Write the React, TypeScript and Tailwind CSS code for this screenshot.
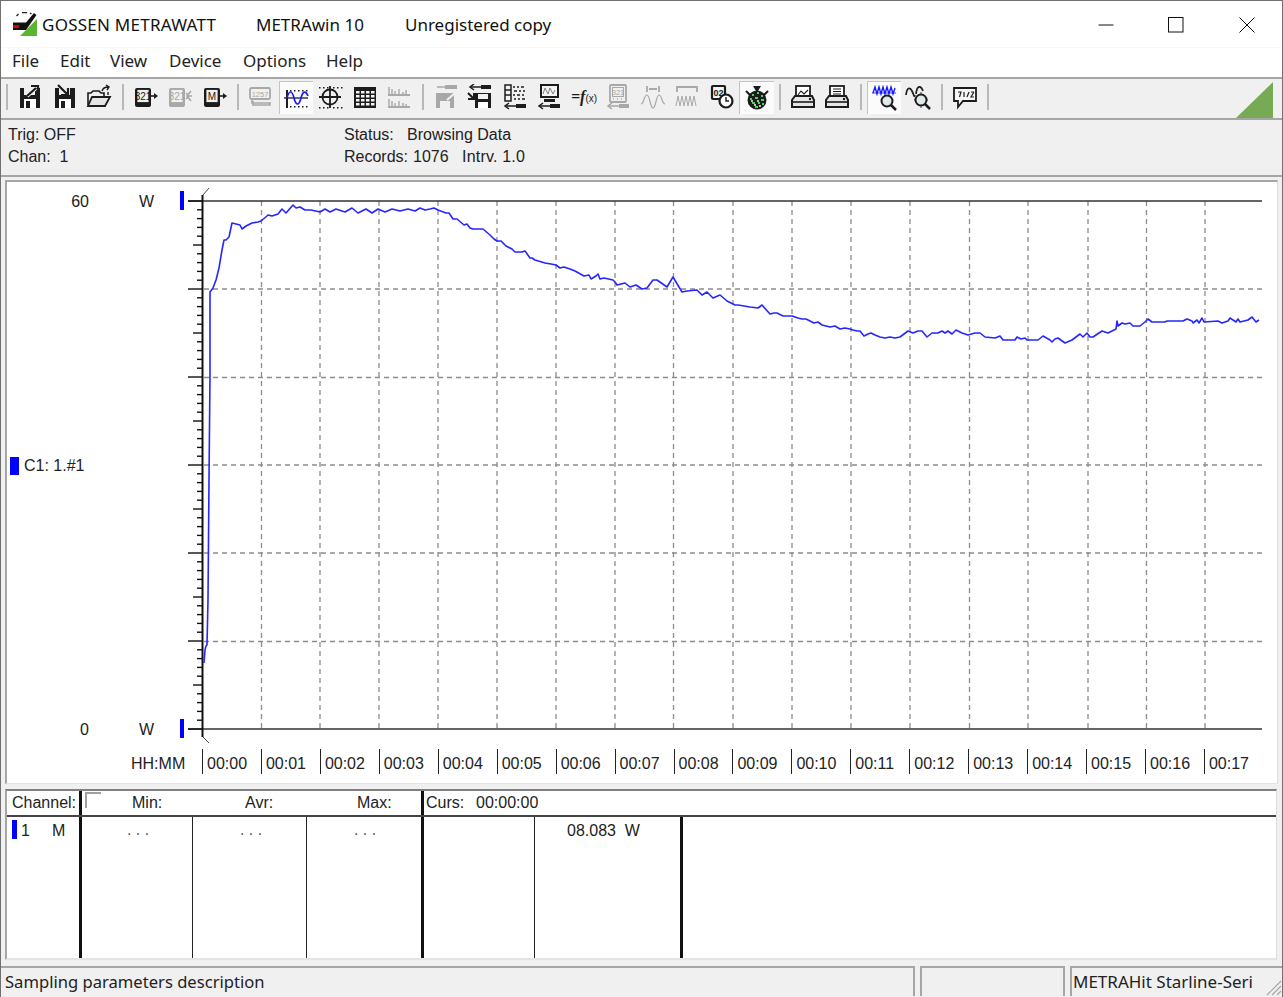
import type { ReactNode } from 'react'

const MENUS = [
  { label: 'File', w: 'w-[48px]' },
  { label: 'Edit', w: 'w-[50px]' },
  { label: 'View', w: 'w-[59px]' },
  { label: 'Device', w: 'w-[74px]' },
  { label: 'Options', w: 'w-[83px]' },
  { label: 'Help', w: 'w-[50px]' },
]

const TIMES = ['00:00', '00:01', '00:02', '00:03', '00:04', '00:05', '00:06', '00:07', '00:08', '00:09', '00:10', '00:11', '00:12', '00:13', '00:14', '00:15', '00:16', '00:17']

const TRACE = '204,663 205,650 206,646 207,645 208,600 209,480 210,375 210,292 213,288 216,280 219,268 222,250 224,240 226,240 229,237 232,223 236,224 240,225 242,229 246,226 252,223 258,222 261,221 267,216 268,215 272,216 278,214 282,209 286,213 293,205 296,208 300,207 305,210 311,210 320,212 325,209 330,212 336,209 345,212 352,208 358,213 366,209 372,213 378,209 385,212 392,209 400,211 408,209 415,211 420,208 425,210 430,209 434,208 438,210 446,213 449,213 453,219 457,219 464,225 467,224 470,228 473,229 483,229 490,235 494,239 497,241 501,241 506,246 512,249 515,252 522,252 525,251 530,258 532,258 535,260 545,263 551,264 556,265 560,268 564,267 570,269 575,271 584,276 589,275 591,279 596,276 598,274 600,279 604,278 613,280 615,282 617,285 621,284 625,283 630,287 636,285 642,289 647,288 653,280 657,280 667,287 673,277 682,292 687,291 697,290 702,295 707,292 713,298 720,295 727,301 735,305 738,305 750,307 758,308 762,305 770,314 774,313 777,313 783,316 792,316 798,318 802,319 806,319 810,321 814,323 818,322 822,325 826,326 830,327 835,326 840,329 845,328 850,329 853,330 857,331 860,331 864,336 868,334 871,333 875,335 880,337 885,338 890,337 895,338 900,337 908,331 913,333 918,331 922,331 927,337 932,333 938,333 942,331 945,333 948,331 952,334 956,330 962,333 968,335 975,333 980,333 985,337 995,338 1000,336 1003,340 1015,340 1017,337 1021,339 1025,338 1027,340 1038,340 1043,336 1050,340 1052,342 1055,339 1058,338 1065,343 1072,340 1080,334 1083,337 1087,333 1090,337 1093,337 1102,331 1108,333 1116,329 1117,321 1118,326 1122,323 1125,324 1130,323 1133,326 1140,326 1145,322 1148,319 1152,322 1165,322 1167,321 1183,321 1187,319 1192,321 1193,323 1197,320 1199,323 1202,318 1204,322 1218,321 1222,323 1228,321 1230,318 1233,320 1236,322 1238,319 1240,322 1248,320 1252,317 1256,322 1259,320'

const GRID_X = [261.5, 320, 379, 438, 497, 556, 615, 673.5, 733, 792, 851, 910, 969.5, 1028, 1088, 1146.5, 1205]
const GRID_Y = [289, 377.5, 465, 553, 641.5]
const TICKS = Array.from({ length: 61 }, (_, i) => i)

const DARK = '#1c1c1c'
const OFF = '#a8a8a8'

function Floppy({ c }: { c: string }) {
  return (
    <>
      <path d="M3 4h20v20H3z" fill={c} />
      <rect x="7" y="4" width="11" height="7" fill="#f0f0f0" />
      <rect x="7" y="15" width="12" height="9" fill="#fff" />
      <rect x="9" y="17" width="4" height="7" fill={c} />
    </>
  )
}

function Meter({ c, label }: { c: string; label: string }) {
  return (
    <>
      <rect x="2" y="4" width="16" height="19" rx="2" fill={c} />
      <rect x="4" y="5.5" width="12" height="13" fill="#f0f0f0" stroke={c} strokeWidth="0.8" />
      <text x="10" y="16" fontSize="10" textAnchor="middle" fill={c} fontFamily="Liberation Sans, sans-serif">{label}</text>
    </>
  )
}

function Plug({ c, y, flip }: { c: string; y: number; flip?: boolean }) {
  return (
    <>
      <path d={`M3 ${y}h12`} stroke={c} strokeWidth="1.5" />
      <rect x="14" y={y - 2} width="10" height="4" fill={c} />
      <path d={flip ? `M7 ${y - 3}l-4 3 4 3` : `M3 ${y - 3}v6`} stroke={c} strokeWidth="1.5" fill="none" />
    </>
  )
}

function Lens() {
  return (
    <>
      <circle cx="16" cy="16" r="5.5" fill="#dfe9ea" stroke={DARK} strokeWidth="2" />
      <path d="M20 20l5 5" stroke={DARK} strokeWidth="2.5" />
    </>
  )
}

function Printer({ paper }: { paper: ReactNode }) {
  return (
    <>
      <rect x="6" y="2" width="14" height="11" fill="#fff" stroke={DARK} strokeWidth="1.8" />
      {paper}
      <path d="M2 16l3-4h17l2 4v7H2z" fill="#e6e6e6" stroke={DARK} strokeWidth="2" />
      <path d="M3 18h20" stroke={DARK} strokeWidth="1.6" />
      <circle cx="20" cy="15" r="1.2" fill={DARK} />
    </>
  )
}

const DOT_XS = [3, 7, 11, 15, 19, 23]

function IconSvg({ children }: { children: ReactNode }) {
  return (
    <svg width="26" height="26" viewBox="0 0 26 26" fill="none">
      {children}
    </svg>
  )
}

const FILE_ICONS = [
  <>
    <Floppy c={DARK} />
    <path d="M10 12l9-8" stroke="#f0f0f0" strokeWidth="4" />
    <path d="M10 12l9-8M14 2h7v7" stroke={DARK} strokeWidth="2.2" />
  </>,
  <>
    <Floppy c={DARK} />
    <path d="M8 2l8 8" stroke="#f0f0f0" strokeWidth="4" />
    <path d="M6 1l9 9M16 4v7H9" stroke={DARK} strokeWidth="2.2" />
  </>,
  <>
    <path d="M2 21V9h3l2-2h6l2 2h3v4" stroke={DARK} strokeWidth="1.6" />
    <path d="M2 22l4-9h18l-5 9z" fill="#e4e4e4" stroke={DARK} strokeWidth="1.8" />
    <path d="M16 7c1-3 3-4 6-4M20 1l3 2-2 3M22 8v3" stroke={DARK} strokeWidth="1.4" />
  </>,
]

const DEVICE_ICONS = [
  <>
    <Meter c={DARK} label="321" />
    <path d="M18 12h4" stroke={DARK} strokeWidth="1.6" />
    <path d="M21 9l4 3-4 3z" fill={DARK} />
  </>,
  <>
    <Meter c={OFF} label="321" />
    <path d="M25 12h-5M24 7l-4 5 4 5M19 9l3 3-3 3" stroke={OFF} strokeWidth="1.6" />
  </>,
  <>
    <Meter c={DARK} label="M" />
    <path d="M18 12h4" stroke={DARK} strokeWidth="1.6" />
    <path d="M21 9l4 3-4 3z" fill={DARK} />
  </>,
]

const TABLE_CELLS = [5, 10, 15, 20].flatMap((x) => [6, 10, 14, 18].map((y) => ({ x, y })))

const VIEW_ICONS = [
  <>
    <path d="M5 17v4h17v-3" stroke={OFF} strokeWidth="1.6" />
    <path d="M4 15v4h18" stroke={OFF} strokeWidth="1.6" />
    <rect x="2" y="4" width="20" height="11" rx="1.5" fill="#f0f0f0" stroke={OFF} strokeWidth="1.8" />
    <text x="12" y="12.5" fontSize="7.5" textAnchor="middle" fill={OFF} fontFamily="Liberation Sans, sans-serif">1257</text>
  </>,
  <>
    {DOT_XS.map((x) => <rect key={x} x={x} y="5" width="1.5" height="1.5" fill={DARK} />)}
    {DOT_XS.map((x) => <rect key={x} x={x} y="21" width="1.5" height="1.5" fill={DARK} />)}
    <path d="M4 5v18" stroke={DARK} strokeWidth="2" />
    <path d="M1 13h24" stroke={DARK} strokeWidth="1.3" />
    <path d="M4 13C6 5 9 5 11 13S16 21 18 13S23 6 25 11" stroke="#1a1aff" strokeWidth="1.7" />
  </>,
  <>
    {[2, 6, 10, 16, 20, 24].map((x) => <rect key={x} x={x} y="3" width="1.5" height="1.5" fill={DARK} />)}
    {[2, 6, 10, 16, 20, 24].map((x) => <rect key={x} x={x} y="23" width="1.5" height="1.5" fill={DARK} />)}
    <circle cx="13" cy="13" r="7.5" stroke={DARK} strokeWidth="1.8" />
    <path d="M13 2v22M2 13h22" stroke={DARK} strokeWidth="1.8" />
  </>,
  <>
    <rect x="2" y="3" width="22" height="21" fill={DARK} />
    {TABLE_CELLS.map((p) => <rect key={`${p.x}-${p.y}`} x={p.x - 1} y={p.y + 1} width="3.5" height="2.5" fill="#f4f4f4" />)}
  </>,
  <>
    <path d="M2 11h22M2 23h22" stroke={OFF} strokeWidth="1.8" />
    <path d="M3 10V3M6 10V5M9 10V7M13 10V5M17 10V8M20 10V6M3 22v-7M6 22v-5M9 22v-3M13 22v-5M17 22v-3M20 22v-2" stroke={OFF} strokeWidth="1.4" />
  </>,
]

const TOOL_ICONS = [
  <>
    <path d="M4 3h15" stroke={OFF} strokeWidth="1.5" />
    <rect x="12" y="1" width="12" height="4" fill={OFF} />
    <path d="M3 9h18v15H3z" fill={OFF} />
    <rect x="7" y="17" width="10" height="7" fill="#f0f0f0" />
    <path d="M14 16l8-7M18 8h5v5" stroke="#f0f0f0" strokeWidth="2" />
  </>,
  <>
    <Plug c={DARK} y={3} flip />
    <path d="M8 9h16v15H8z" fill={DARK} />
    <rect x="11" y="10" width="10" height="5" fill="#f0f0f0" />
    <rect x="11" y="18" width="10" height="6" fill="#fff" />
    <path d="M1 9l6 6M7 9v6H1" stroke={DARK} strokeWidth="2" />
  </>,
  <>
    <rect x="3" y="1" width="6" height="16" fill="#f4f4f4" stroke={DARK} strokeWidth="1.5" />
    <path d="M3 6h6M3 11h6" stroke={DARK} strokeWidth="1.3" />
    <path d="M11 3h2M15 3h2M19 3h3M12 7h3M17 7h2M21 7h2M11 11h2M15 11h3M20 11h2M12 15h2M16 15h2M20 15h3" stroke={DARK} strokeWidth="1.6" />
    <Plug c={DARK} y={22} flip />
  </>,
  <>
    <rect x="4" y="0" width="19" height="14" fill={DARK} />
    <rect x="6" y="2" width="15" height="10" fill="#f4f4f4" />
    <path d="M7 10l2-6 3 6 2-6 3 6 2-4" stroke="#777" strokeWidth="0.9" />
    <rect x="8" y="15" width="11" height="3" fill={DARK} />
    <Plug c={DARK} y={22} flip />
  </>,
  <text x="13" y="18" fontSize="16" textAnchor="middle" fill={DARK} fontFamily="Liberation Serif, serif" fontWeight="700" fontStyle="italic">=f<tspan fontSize="10" fontStyle="normal" fontWeight="400" fontFamily="Liberation Sans, sans-serif">(x)</tspan></text>,
  <>
    <rect x="5" y="1" width="16" height="17" rx="1" fill="#f0f0f0" stroke={OFF} strokeWidth="1.8" />
    <rect x="7.5" y="3.5" width="11" height="9" stroke={OFF} />
    <text x="13" y="11" fontSize="7.5" textAnchor="middle" fill={OFF} fontFamily="Liberation Sans, sans-serif">321</text>
    <path d="M8 15h1M12 15h1M16 15h1" stroke={OFF} strokeWidth="1.4" />
    <Plug c={OFF} y={22} flip />
  </>,
  <>
    <path d="M7 2v6M19 2v6M9 5h8" stroke={OFF} strokeWidth="1.8" />
    <path d="M1 20C4 20 4 11 7 11S10 24 13 24S16 11 19 11S22 20 25 20" stroke={OFF} strokeWidth="1.2" />
  </>,
  <>
    <path d="M3 8V3h20v5" stroke={OFF} strokeWidth="1.8" />
    <path d="M2 22l2-10 2 10 2-10 2 10 2-10 2 10 2-10 2 10 2-10 2 10" stroke={OFF} strokeWidth="1" />
  </>,
  <>
    <rect x="3" y="2" width="13" height="13" rx="1" fill="#f4f4f4" stroke={DARK} strokeWidth="2.2" />
    <text x="9.5" y="12" fontSize="9" fontWeight="700" textAnchor="middle" fill={DARK} fontFamily="Liberation Sans, sans-serif">02</text>
    <circle cx="17" cy="17" r="6.5" fill="#fff" stroke={DARK} strokeWidth="2.2" />
    <path d="M17 13v4h3" stroke={DARK} strokeWidth="1.4" />
  </>,
  <>
    <path d="M9 1h8l-3 5h-2z" fill={DARK} />
    <path d="M2 6l5 5M24 6l-5 5" stroke={DARK} strokeWidth="2" />
    <circle cx="13" cy="15" r="9.5" fill={DARK} />
    <path d="M8 10h2M13 8h2M17 11h2M6 14h2M11 13h3M17 15h3M8 18h3M14 18h2M11 22h3M18 19h2" stroke="#3fd84f" strokeWidth="2" />
    <path d="M7 16h2M13 16h2M10 20h2M15 21h2" stroke="#f0f0f0" strokeWidth="1.5" />
  </>,
]

const PRINT_ICONS = [
  <Printer paper={<path d="M8 11l3-4 3 3 4-4" stroke={DARK} strokeWidth="1.1" />} />,
  <Printer paper={<path d="M9 5h8M9 7.5h8M9 10h8" stroke={DARK} strokeWidth="1.1" />} />,
]

const ZOOM_ICONS = [
  <>
    <path d="M2 8l2-6 2 7 2-7 2 7 2-7 2 7 2-7 2 7 2-7 2 7 2-6" stroke="#1a1aff" strokeWidth="1.4" />
    <path d="M1 8h24" stroke="#1a1aff" strokeWidth="0.8" />
    <Lens />
  </>,
  <>
    <path d="M1 11C2 3 5 3 7 7S9 14 10 11" stroke={DARK} strokeWidth="1.7" />
    <path d="M11 10C12 1 16 1 18 7" stroke={DARK} strokeWidth="1.7" />
    <path d="M16 8v16M9 16h14" stroke={DARK} strokeWidth="0.8" />
    <Lens />
  </>,
]

const NOTE_ICON = (
  <>
    <path d="M2 4h22v13H11l-5 6v-6H2z" fill="#f8f8f8" stroke={DARK} strokeWidth="1.8" />
    <path d="M6 8h3l-1.5 5M12 8v5M15 13l2-5M19 8h3M22 13h-3l3-5" stroke={DARK} strokeWidth="1.2" />
  </>
)

function ToolButton({ icon, active }: { icon: ReactNode; active?: boolean }) {
  return (
    <div className={`flex h-[33px] w-[34.5px] shrink-0 items-center justify-center ${active ? 'border-t border-l border-[#c4c4c4] bg-[#fbfbfb]' : ''}`}>
      <IconSvg>{icon}</IconSvg>
    </div>
  )
}

function Sep() {
  return <div className="mx-[5px] h-[26px] w-[2px] shrink-0 bg-[#b8b8b8]" />
}

function TitleBar() {
  return (
    <div className="flex h-[46px] items-center bg-white pt-[1px] font-['Noto_Sans',sans-serif] text-[17px] text-[#111]">
      <svg className="ml-[12px] shrink-0" width="25" height="25" viewBox="13 11 25 25">
        <path d="M20 35L37 18v17z" fill="#5cb531" />
        <path d="M13 21.5h13L34 12l2.5 2L26 29H13z" fill="#111" />
        <rect x="13" y="24" width="6" height="3" fill="#e00000" />
        <path d="M16.5 15l2-2M22 11.5h5M30 12l1.5 1" stroke="#222" strokeWidth="1.4" />
      </svg>
      <span className="ml-[4px] w-[214px] tracking-[0.25px]">GOSSEN METRAWATT</span>
      <span className="w-[149px]">METRAwin 10</span>
      <span>Unregistered copy</span>
      <div className="ml-auto flex">
        <div className="flex w-[70.5px] justify-center">
          <svg width="16" height="16" viewBox="0 0 16 16"><path d="M0.5 8h15" stroke="#111" /></svg>
        </div>
        <div className="flex w-[70.5px] justify-center">
          <svg width="16" height="16" viewBox="0 0 16 16"><rect x="0.5" y="0.5" width="14.5" height="14.5" fill="none" stroke="#111" /></svg>
        </div>
        <div className="flex w-[70.5px] justify-center">
          <svg width="16" height="16" viewBox="0 0 16 16"><path d="M0.5 0.5l15 15M15.5 0.5l-15 15" stroke="#111" /></svg>
        </div>
      </div>
    </div>
  )
}

function MenuBar() {
  return (
    <div className="flex h-[30px] items-center border-t border-[#f8f8f8] bg-white pb-[3px] pl-[11px] font-['Noto_Sans',sans-serif] text-[17px] text-[#222]">
      {MENUS.map((m) => (
        <span key={m.label} className={m.w}>{m.label}</span>
      ))}
    </div>
  )
}

function Toolbar() {
  return (
    <div className="relative flex h-[43px] items-center border-y-2 border-[#a6a6a6] bg-[#f0f0f0] pb-[3px] pl-[5px]">
      <div className="mr-[5px] h-[26px] w-[2px] shrink-0 bg-[#b8b8b8]" />
      {FILE_ICONS.map((icon, i) => <ToolButton key={i} icon={icon} />)}
      <Sep />
      {DEVICE_ICONS.map((icon, i) => <ToolButton key={i} icon={icon} />)}
      <Sep />
      {VIEW_ICONS.map((icon, i) => <ToolButton key={i} icon={icon} active={i === 1} />)}
      <Sep />
      {TOOL_ICONS.map((icon, i) => <ToolButton key={i} icon={icon} active={i === 9} />)}
      <Sep />
      {PRINT_ICONS.map((icon, i) => <ToolButton key={i} icon={icon} />)}
      <Sep />
      {ZOOM_ICONS.map((icon, i) => <ToolButton key={i} icon={icon} active={i === 0} />)}
      <Sep />
      <ToolButton icon={NOTE_ICON} />
      <Sep />
      <svg className="absolute top-[3px] right-[9px]" width="37" height="36" viewBox="0 0 37 36">
        <path d="M0 36L37 0v36z" fill="#76aa55" />
      </svg>
    </div>
  )
}

function InfoBar() {
  return (
    <div className="flex h-[57px] flex-col justify-center border-b-2 border-[#a6a6a6] bg-[#f0f0f0] pb-[3px] pl-[7px] leading-[22px]">
      <div className="flex">
        <span className="w-[336px]">Trig: OFF</span>
        <span className="w-[63px]">Status:</span>
        <span>Browsing Data</span>
      </div>
      <div className="flex">
        <span className="w-[336px] whitespace-pre">Chan:  1</span>
        <span className="w-[69px]">Records:</span>
        <span className="w-[49px]">1076</span>
        <span className="tracking-[0.2px] whitespace-pre">Intrv. 1.0</span>
      </div>
    </div>
  )
}

function PlotLines() {
  return (
    <svg className="shrink-0" width="1100" height="564" viewBox="176 182 1100 564" fill="none">
      {GRID_X.map((x) => (
        <path key={x} d={`M${x} 201V729`} stroke="#8c8c8c" strokeWidth="1.3" strokeDasharray="5 4" />
      ))}
      {GRID_Y.map((y) => (
        <path key={y} d={`M204 ${y}H1262`} stroke="#8c8c8c" strokeWidth="1.3" strokeDasharray="5 4" />
      ))}
      <path d="M188 201H1262M188 729H1262" stroke="#333" strokeWidth="1.6" />
      <path d="M202.5 195V737" stroke="#111" strokeWidth="2" />
      {TICKS.map((i) => (
        <path
          key={i}
          d={`M${i % 10 === 0 ? 188 : i % 5 === 0 ? 193 : 197} ${201 + i * 8.8}H203`}
          stroke="#111"
          strokeWidth="1.4"
        />
      ))}
      <path d="M203 195l6-7M203 737l6 6" stroke="#444" strokeWidth="1" />
      <polyline points={TRACE} stroke="#2626ff" strokeWidth="1.6" strokeLinejoin="round" />
      <rect x="180" y="191" width="4" height="19" fill="#0000ff" />
      <rect x="180" y="719" width="4" height="19" fill="#0000ff" />
    </svg>
  )
}

function ChartPanel() {
  return (
    <div className="ml-[4px] flex h-[604px] w-[1273px] flex-col border-t-2 border-r border-b border-l-2 border-t-[#a6a6a6] border-r-[#dcdcdc] border-b-[#e4e4e4] border-l-[#a6a6a6] bg-white">
      <div className="flex h-[564px]">
        <div className="flex w-[169px] shrink-0 flex-col justify-between pt-[10px] pb-[6px] leading-[20px]">
          <div className="flex">
            <span className="w-[82px] text-right">60</span>
            <span className="ml-[50px]">W</span>
          </div>
          <div className="flex items-center pl-[3px]">
            <span className="h-[18px] w-[9px] bg-[#0000ff]" />
            <span className="ml-[5px]">C1: 1.#1</span>
          </div>
          <div className="flex">
            <span className="w-[82px] text-right">0</span>
            <span className="ml-[50px]">W</span>
          </div>
        </div>
        <PlotLines />
      </div>
      <div className="mt-[3px] flex h-[25px] pl-[124px]">
        <span className="w-[71px] pt-[5px] leading-[20px]">HH:MM</span>
        {TIMES.map((t) => (
          <div key={t} className="h-[25px] w-[58.94px] shrink-0 border-l-[1.5px] border-[#222] pt-[5px] pl-[4px] leading-[20px]">
            {t}
          </div>
        ))}
      </div>
    </div>
  )
}

function ChannelTable() {
  return (
    <div className="mt-[5px] ml-[4px] flex h-[171px] w-[1272px] flex-col border-t-2 border-r border-b-2 border-l-2 border-t-[#808080] border-r-[#dcdcdc] border-b-[#e4e4e4] border-l-[#a6a6a6] bg-white">
      <div className="flex h-[26px] border-b-2 border-[#444] leading-[24px]">
        <span className="w-[72px] pl-[5px]">Channel:</span>
        <div className="flex w-[342px] items-start border-l-[3px] border-[#111]">
          <span className="mt-[1px] ml-[3px] h-[16px] w-[16px] border-t-2 border-l-2 border-[#a0a0a0]" />
          <span className="ml-[31px] w-[113px]">Min:</span>
          <span className="w-[112px]">Avr:</span>
          <span>Max:</span>
        </div>
        <div className="flex border-l-[3px] border-[#111] pl-[2px]">
          <span className="w-[50px]">Curs:</span>
          <span>00:00:00</span>
        </div>
      </div>
      <div className="flex flex-1 leading-[20px]">
        <div className="flex w-[72px] pt-[3px]">
          <span className="ml-[5px] h-[19px] w-[5px] bg-[#0000ff]" />
          <span className="mt-[1px] ml-[4px] w-[31px]">1</span>
          <span className="mt-[1px]">M</span>
        </div>
        <div className="w-[113px] border-l-[3px] border-[#111] pt-[3px] pl-[2px] text-center text-[#555]">. . .</div>
        <div className="w-[114px] border-l border-[#222] pt-[3px] pl-[3px] text-center text-[#555]">. . .</div>
        <div className="w-[115px] border-l border-[#222] pt-[3px] pl-[2px] text-center text-[#555]">. . .</div>
        <div className="w-[113px] border-l-[3px] border-[#111]" />
        <div className="w-[146px] border-l border-[#222] pt-[4px] pl-[32px] whitespace-pre">08.083  W</div>
        <div className="flex-1 border-l-[3px] border-[#111]" />
      </div>
    </div>
  )
}

function StatusBar() {
  return (
    <div className="mt-[6px] flex h-[30px] font-['Noto_Sans',sans-serif] text-[16.6px] text-[#222]">
      <div className="flex w-[914px] items-center border-t-2 border-r-2 border-[#a6a6a6] pl-[4px]">Sampling parameters description</div>
      <div className="ml-[5px] w-[145px] border-t-2 border-r-2 border-l-2 border-[#a6a6a6]" />
      <div className="relative ml-[5px] flex flex-1 items-center border-t-2 border-l-2 border-[#a6a6a6] pl-[1px] text-[17px] whitespace-nowrap">
        METRAHit Starline-Seri
        <svg className="absolute right-0 bottom-0" width="18" height="18" viewBox="0 0 18 18">
          <path d="M17 3L3 17M17 8L8 17M17 13l-4 4" stroke="#a6a6a6" strokeWidth="1.2" />
        </svg>
      </div>
    </div>
  )
}

export default function App() {
  return (
    <div className="flex h-[997px] w-[1283px] flex-col overflow-hidden border-t border-r border-l border-[#707070] bg-[#f0f0f0] font-['Liberation_Sans',sans-serif] text-[16px] text-[#222]">
      <TitleBar />
      <MenuBar />
      <Toolbar />
      <InfoBar />
      <div className="h-[3px] shrink-0" />
      <ChartPanel />
      <ChannelTable />
      <StatusBar />
    </div>
  )
}
